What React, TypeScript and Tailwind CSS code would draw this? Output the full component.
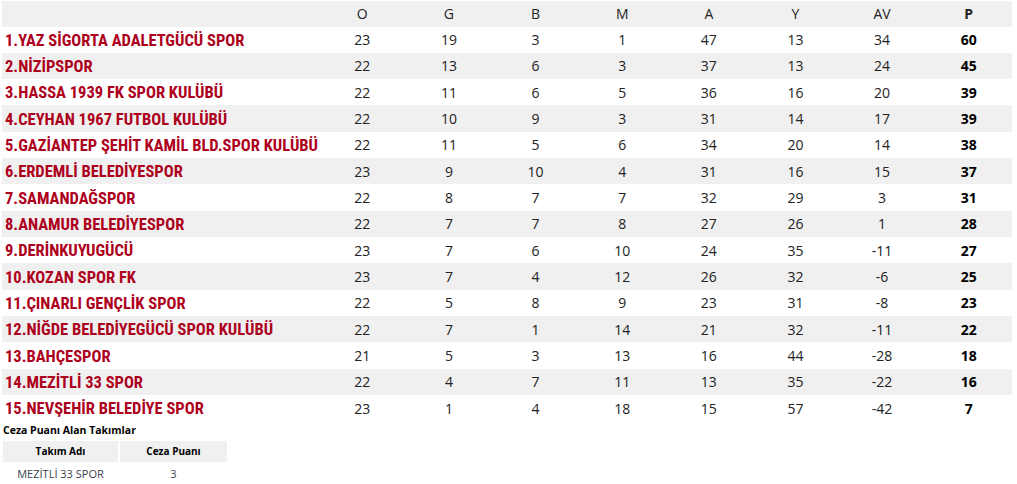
type Team = {
  name: string;
  o: number;
  g: number;
  b: number;
  m: number;
  a: number;
  y: number;
  av: number;
  p: number;
};

const teams: Team[] = [
  { name: "1.YAZ SİGORTA ADALETGÜCÜ SPOR", o: 23, g: 19, b: 3, m: 1, a: 47, y: 13, av: 34, p: 60 },
  { name: "2.NİZİPSPOR", o: 22, g: 13, b: 6, m: 3, a: 37, y: 13, av: 24, p: 45 },
  { name: "3.HASSA 1939 FK SPOR KULÜBÜ", o: 22, g: 11, b: 6, m: 5, a: 36, y: 16, av: 20, p: 39 },
  { name: "4.CEYHAN 1967 FUTBOL KULÜBÜ", o: 22, g: 10, b: 9, m: 3, a: 31, y: 14, av: 17, p: 39 },
  { name: "5.GAZİANTEP ŞEHİT KAMİL BLD.SPOR KULÜBÜ", o: 22, g: 11, b: 5, m: 6, a: 34, y: 20, av: 14, p: 38 },
  { name: "6.ERDEMLİ BELEDİYESPOR", o: 23, g: 9, b: 10, m: 4, a: 31, y: 16, av: 15, p: 37 },
  { name: "7.SAMANDAĞSPOR", o: 22, g: 8, b: 7, m: 7, a: 32, y: 29, av: 3, p: 31 },
  { name: "8.ANAMUR BELEDİYESPOR", o: 22, g: 7, b: 7, m: 8, a: 27, y: 26, av: 1, p: 28 },
  { name: "9.DERİNKUYUGÜCÜ", o: 23, g: 7, b: 6, m: 10, a: 24, y: 35, av: -11, p: 27 },
  { name: "10.KOZAN SPOR FK", o: 23, g: 7, b: 4, m: 12, a: 26, y: 32, av: -6, p: 25 },
  { name: "11.ÇINARLI GENÇLİK SPOR", o: 22, g: 5, b: 8, m: 9, a: 23, y: 31, av: -8, p: 23 },
  { name: "12.NİĞDE BELEDİYEGÜCÜ SPOR KULÜBÜ", o: 22, g: 7, b: 1, m: 14, a: 21, y: 32, av: -11, p: 22 },
  { name: "13.BAHÇESPOR", o: 21, g: 5, b: 3, m: 13, a: 16, y: 44, av: -28, p: 18 },
  { name: "14.MEZİTLİ 33 SPOR", o: 22, g: 4, b: 7, m: 11, a: 13, y: 35, av: -22, p: 16 },
  { name: "15.NEVŞEHİR BELEDİYE SPOR", o: 23, g: 1, b: 4, m: 18, a: 15, y: 57, av: -42, p: 7 },
];

const cols = ["O", "G", "B", "M", "A", "Y", "AV"];

export default function App() {
  return (
    <div className="w-[1017px] h-[484px] bg-white pt-px px-[2px] font-['Open_Sans',sans-serif] text-[#222]">
      <div className="w-[1010px]">
        <div className="flex h-[25.5px] items-center bg-[#f0f0f0] text-[14px]">
          <div className="w-[317px]" />
          {cols.map((c) => (
            <div key={c} className="flex-1 text-center">{c}</div>
          ))}
          <div className="flex-1 text-center font-bold">P</div>
        </div>
        {teams.map((t, i) => (
          <div
            key={t.name}
            className={`flex h-[26.33px] items-center text-[14px] ${i % 2 === 1 ? "bg-[#f0f0f0]" : "bg-white"}`}
          >
            <div className="w-[317px] pl-[3px] pt-[3px] whitespace-nowrap font-['Roboto_Condensed',sans-serif] text-[16.5px] font-bold text-[#ad001c]">
              {t.name}
            </div>
            <div className="flex-1 text-center">{t.o}</div>
            <div className="flex-1 text-center">{t.g}</div>
            <div className="flex-1 text-center">{t.b}</div>
            <div className="flex-1 text-center">{t.m}</div>
            <div className="flex-1 text-center">{t.a}</div>
            <div className="flex-1 text-center">{t.y}</div>
            <div className="flex-1 text-center">{t.av}</div>
            <div className="flex-1 text-center font-bold text-black">{t.p}</div>
          </div>
        ))}
      </div>
      <div className="mt-[2px] pl-px text-[10.5px] font-bold text-black">
        Ceza Puanı Alan Takımlar
      </div>
      <div className="mt-[2px] ml-px w-[224px]">
        <div className="flex gap-[2px] text-[10px] font-bold text-black">
          <div className="flex h-[21px] w-[115px] items-center justify-center bg-[#f0f0f0]">Takım Adı</div>
          <div className="flex h-[21px] flex-1 items-center justify-center bg-[#f0f0f0]">Ceza Puanı</div>
        </div>
        <div className="flex gap-[2px] text-[11px] text-[#3a3f4a]">
          <div className="flex h-[24px] w-[115px] items-center justify-center">MEZİTLİ 33 SPOR</div>
          <div className="flex h-[24px] flex-1 items-center justify-center">3</div>
        </div>
      </div>
    </div>
  );
}
